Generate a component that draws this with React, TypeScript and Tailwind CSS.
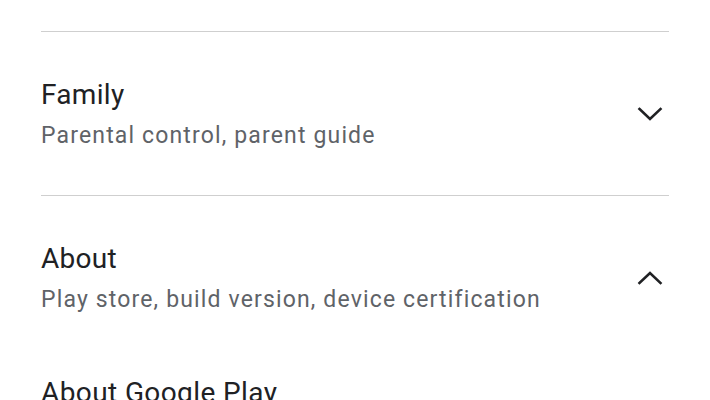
import { useState } from 'react'

interface Section {
  id: string
  title: string
  subtitle: string
}

const sections: Section[] = [
  { id: 'family', title: 'Family', subtitle: 'Parental control, parent guide' },
  { id: 'about', title: 'About', subtitle: 'Play store, build version, device certification' },
]

function Chevron({ up }: { up: boolean }) {
  return (
    <svg width="26" height="16" viewBox="0 0 26 16" className="shrink-0">
      <polyline
        points={up ? '2.5,13 13,3 23.5,13' : '2.5,3 13,13 23.5,3'}
        fill="none"
        stroke="#202124"
        strokeWidth="2.6"
        strokeLinecap="square"
      />
    </svg>
  )
}

export default function App() {
  const [open, setOpen] = useState<string | null>('about')

  return (
    <div className="min-h-[400px] bg-white px-[41px] pt-[31px] font-['Roboto',sans-serif]">
      {sections.map(s => (
        <div key={s.id}>
          <div className="h-px bg-[#cfcfcf]" />
          <button
            onClick={() => setOpen(open === s.id ? null : s.id)}
            className="flex h-[163px] w-full items-center justify-between pr-[6px] text-left"
          >
            <div className="flex flex-col gap-[8px]">
              <span className="text-[28px] leading-[36px] tracking-[0.3px] text-[#202124]">{s.title}</span>
              <span className="text-[23px] leading-[30px] tracking-[1.15px] text-[#5f6368]">{s.subtitle}</span>
            </div>
            <Chevron up={open === s.id} />
          </button>
          {open === s.id && (
            <div className="pt-[16px] text-[28px] leading-[36px] tracking-[0.4px] text-[#202124]">About Google Play</div>
          )}
        </div>
      ))}
    </div>
  )
}
